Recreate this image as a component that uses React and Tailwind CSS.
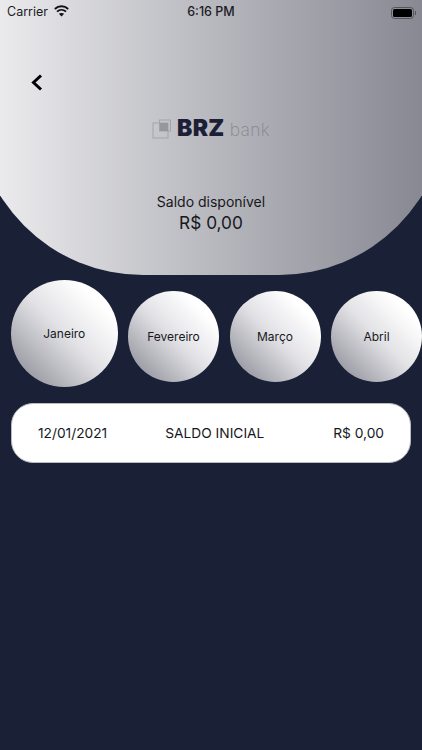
const months = [
  { name: 'Fevereiro' },
  { name: 'Março' },
  { name: 'Abril' },
];

const StatusBar = () => (
  <div className="flex h-[22px] items-center justify-between pl-[7px] pr-[6px] pt-[3px] text-[12.5px] text-[#1b1b1f]">
    <div className="flex w-[120px] items-center gap-[6px]">
      <span>Carrier</span>
      <svg width="15" height="12" viewBox="0 0 15 12" fill="none" className="-mt-[4px] text-[#111]">
        <path d="M.8 4C4.6.4 10.4.4 14.2 4" stroke="currentColor" strokeWidth="1.9" />
        <path d="M3 6.6c2.6-2.3 6.4-2.3 9 0" stroke="currentColor" strokeWidth="1.9" />
        <path d="M7.5 11.6 4.9 8.8c1.5-1.2 3.7-1.2 5.2 0z" fill="currentColor" />
      </svg>
    </div>
    <span className="-ml-[1px] font-medium">6:16 PM</span>
    <div className="flex w-[120px] items-center justify-end">
      <div className="flex h-[12px] w-[23px] items-center rounded-[3.5px] border-[1.5px] border-[#55565c] p-[1px]">
        <div className="h-full w-full rounded-[1.5px] bg-black" />
      </div>
      <div className="ml-[1px] h-[4px] w-[1px] bg-[#55565c]" />
    </div>
  </div>
);

const Logo = () => (
  <div className="flex items-center justify-center">
    <svg width="20" height="20" viewBox="0 0 20 20" fill="none">
      <rect x="1" y="4" width="15" height="15" stroke="#a3a4a9" strokeWidth="1" />
      <rect x="7.5" y="1" width="11" height="11" stroke="#a3a4a9" strokeWidth="1" />
      <rect x="8" y="4" width="8" height="8" fill="#96979c" />
    </svg>
    <span className="ml-[5px] text-[23px] leading-none font-black tracking-[0.3px] text-[#1b2036]">BRZ</span>
    <span className="ml-[5px] mt-[3px] text-[17.5px] leading-none font-extralight tracking-[0.3px] text-[#85868c]">bank</span>
  </div>
);

const App = () => {
  return (
    <div className="h-[750px] w-[422px] overflow-hidden bg-[#1a2036] font-['Inter','Liberation_Sans',sans-serif]">
      <div className="-mx-[25px] h-[275px] rounded-b-[168px] bg-gradient-to-r from-[#f1f1f3] to-[#82838d] px-[25px]">
        <StatusBar />
        <div className="pl-[31px] pt-[52px]">
          <svg width="12" height="17" viewBox="0 0 12 17" fill="none" className="block">
            <path d="M10 1.5 2.5 8.5l7.5 7" stroke="#000" strokeWidth="3" />
          </svg>
        </div>
        <div className="pt-[26px]">
          <Logo />
        </div>
        <div className="pt-[52px] text-center text-[#17181c]">
          <p className="text-[14px] leading-[20px]">Saldo disponível</p>
          <p className="text-[17.25px] leading-[22px]">R$ 0,00</p>
        </div>
      </div>

      <div className="flex items-start gap-[10.5px] pl-[11px] pt-[5px]">
        <div className="flex h-[107px] w-[106.5px] shrink-0 items-center justify-center rounded-full bg-gradient-to-bl from-white from-[20%] via-[#e2e2e6] via-[50%] to-[#9a9ba3] to-[88%] text-[12px] text-[#17181c]">
          Janeiro
        </div>
        {months.map((m) => (
          <div
            key={m.name}
            className="mt-[11px] flex h-[91px] w-[91px] shrink-0 items-center justify-center rounded-full bg-gradient-to-bl from-white from-[20%] via-[#e2e2e6] via-[50%] to-[#9a9ba3] to-[88%] text-[12px] text-[#17181c]"
          >
            {m.name}
          </div>
        ))}
      </div>

      <div className="mx-[11px] mt-[16px] flex h-[60px] items-center rounded-[22px] border border-[#b9bac2] bg-white pl-[26px] pr-[26px] text-[13.75px] text-[#17181c]">
        <span>12/01/2021</span>
        <span className="ml-[58px]">SALDO INICIAL</span>
        <span className="ml-auto">R$ 0,00</span>
      </div>
    </div>
  );
};

export default App;
